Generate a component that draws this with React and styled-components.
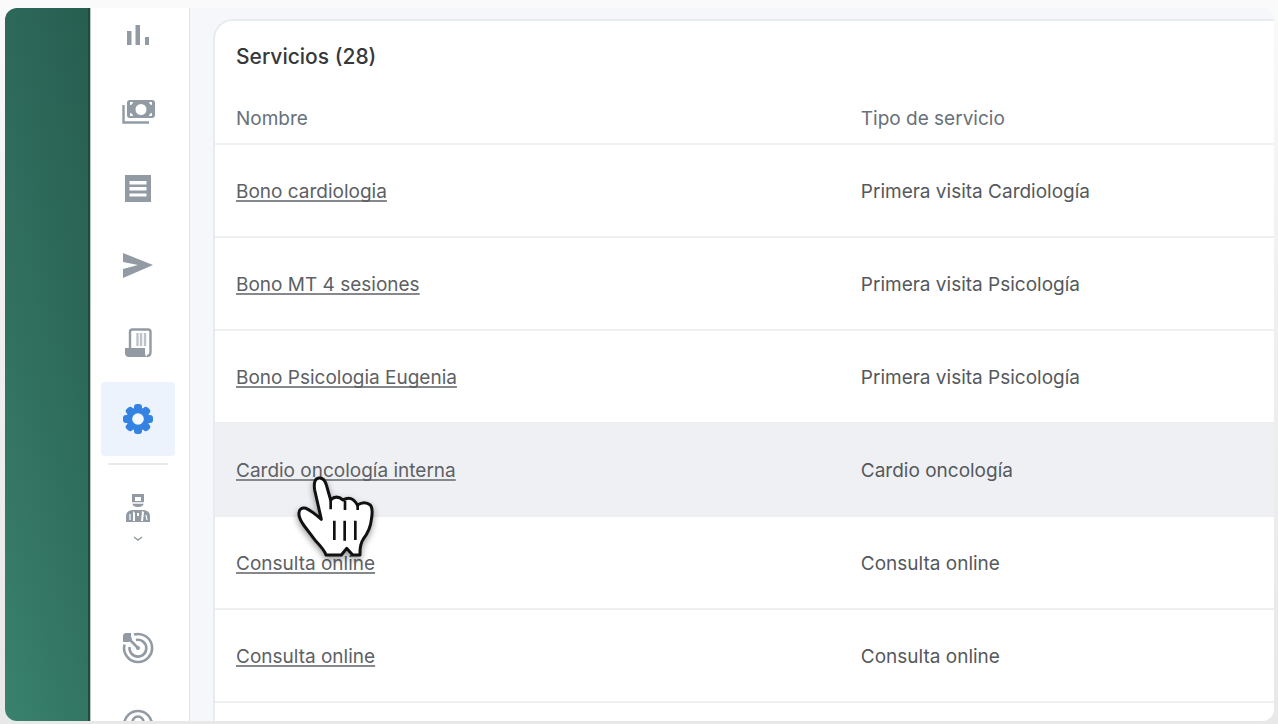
import React from "react";
import styled, { createGlobalStyle } from "styled-components";

const GlobalStyle = createGlobalStyle`
  * { box-sizing: border-box; }
  body {
    margin: 0;
    background: linear-gradient(#fafafa, #f0f0f0 40%, #e8e8e8);
    font-family: Inter, "Liberation Sans", sans-serif;
    color: #55585c;
  }
`;

const Stage = styled.div`
  height: 100vh;
  padding: 8px 4px 3px 5px;
`;

const Frame = styled.div`
  display: flex;
  height: 100%;
  overflow: hidden;
  border-radius: 12px;
  background: #f5f7fb;
`;

const Backdrop = styled.div`
  flex: none;
  width: 85px;
  border-right: 2px solid #214c3c;
  background: linear-gradient(90deg, #ffffff04, #00000014), linear-gradient(#2a6657, #30715f 50%, #36806b);
`;

const Sidebar = styled.nav`
  flex: none;
  display: flex;
  flex-direction: column;
  align-items: center;
  gap: 3px;
  width: 100px;
  margin-top: -11px;
  padding-right: 4px;
  background: #ffffff;
  border-left: 1px solid #b9c8c0;
  border-right: 1px solid #dfe4ea;
`;

const NavButton = styled.button`
  flex: none;
  display: flex;
  flex-direction: column;
  align-items: center;
  justify-content: center;
  gap: 13px;
  width: 74px;
  height: ${(p) => (p.$tall ? 98 : 74)}px;
  padding: 0;
  border: 0;
  border-radius: 4px;
  background: ${(p) => (p.$active ? "#edf3fd" : "transparent")};
  color: ${(p) => (p.$active ? "#3482e2" : "#929aa4")};
  svg { display: block; }
`;

const Separator = styled.hr`
  flex: none;
  width: 60px;
  height: 2px;
  margin: 4px 0 0;
  border: 0;
  background: #e9eaec;
`;

const Spacer = styled.div`
  flex: none;
  height: 39px;
`;

const Main = styled.main`
  flex: 1;
  min-width: 0;
  padding: 11px 0 0 23px;
`;

const Card = styled.section`
  height: 100%;
  overflow: hidden;
  border: 2px solid #e7ecf2;
  border-width: 2px 0 0 2px;
  border-radius: 20px 0 0 0;
  background: #ffffff;
`;

const Title = styled.h1`
  margin: 0;
  padding: 22px 21px 0;
  font-size: 21px;
  line-height: 28px;
  font-weight: 500;
  color: #36383b;
`;

const Table = styled.table`
  width: 100%;
  table-layout: fixed;
  border-collapse: separate;
  border-spacing: 0;
`;

const HeadCell = styled.th`
  width: ${(p) => p.$width};
  height: 74px;
  padding: 24px 21px 0;
  border-bottom: 2px solid #f1f2f4;
  text-align: left;
  font-size: 19px;
  line-height: 24px;
  font-weight: 400;
  color: #687079;
`;

const Row = styled.tr`
  background: ${(p) => (p.$hovered ? "#eff0f4" : "transparent")};
`;

const Cell = styled.td`
  position: relative;
  height: 93px;
  padding: 2px 21px 0;
  border-bottom: 2px solid #eeeff1;
  font-size: 19px;
  line-height: 24px;
`;

const ServiceLink = styled.a`
  color: #5d6064;
  text-decoration: underline #85888c;
  text-decoration-thickness: 2px;
  text-underline-offset: 2px;
  text-decoration-skip-ink: none;
`;

const Pointer = styled.svg`
  position: absolute;
  z-index: 1;
  left: 82px;
  top: 51px;
  overflow: visible;
  pointer-events: none;
  filter: drop-shadow(0 3px 3px #00000066);
`;

const Icon = ({ size = 36, height = size, children }) => (
  <svg width={size} height={height} viewBox={`0 0 ${size} ${height}`} fill="none" stroke="none" aria-hidden="true">
    {children}
  </svg>
);

const ChartIcon = () => (
  <Icon>
    <path fill="currentColor" d="M7 15h4.500v14H7zM15.500 9h4.500v20h-4.500zM25 21h4v8h-4z" />
  </Icon>
);

const CashIcon = () => (
  <Icon>
    <path stroke="currentColor" strokeWidth="2.4" d="M3.5 12v17.5H29" />
    <path
      fill="currentColor"
      fillRule="evenodd"
      d="M10 7h22q3 0 3 3v12q0 3-3 3H10q-3 0-3-3V10q0-3 3-3zM21 11a5.5 5.5 0 1 0 0 11a5.5 5.5 0 0 0 0-11zM10 9v3q2.500 0 3-3zM32 9h-3q.5 3 3 3zM10 23h3q-.5-3-3-3zM32 23v-3q-2.500 0-3 3z"
    />
  </Icon>
);

const ListIcon = () => (
  <Icon>
    <path fill="currentColor" fillRule="evenodd" d="M5 5h26v27H5zM9.500 11v3.500h17V11zM9.500 17v3.500h17V17zM9.500 23.500v3h17v-3z" />
  </Icon>
);

const SendIcon = () => (
  <Icon>
    <path fill="currentColor" d="M3 6 33 18 3 31v-9l15-4-15-3z" />
  </Icon>
);

const ReceiptIcon = () => (
  <Icon>
    <path stroke="currentColor" strokeWidth="2.400" d="M10 25V8q0-2.500 2.500-2.500H28q2.500 0 2.500 2.500v20q0 4-3.500 4" />
    <path fill="currentColor" d="M5 24h20v5q0 3 3 4H9q-4 0-4-4z" />
    <path stroke="currentColor" strokeWidth="2.400" d="M17.500 9v13M21 9v13M25 9v13" opacity=".6" />
  </Icon>
);

const GearIcon = () => (
  <Icon>
    <g fill="currentColor">
      {[0, 45, 90, 135].map((angle) => (
        <rect key={angle} x="14" y="3" width="8" height="30" rx="3" transform={`rotate(${angle} 18 18)`} />
      ))}
      <circle cx="18" cy="18" r="11.500" />
    </g>
    <circle cx="18" cy="18" r="5.800" fill="#f4f8ff" />
  </Icon>
);

const DoctorIcon = () => (
  <Icon size={28} height={30}>
    <path fill="currentColor" fillRule="evenodd" d="M8 1h12v8q0 5-6 5t-6-5zM11 4v4h6V4z" />
    <path stroke="#ffffff" strokeWidth="1.500" d="M8 10h12" />
    <path fill="currentColor" fillRule="evenodd" d="M2 29v-6q0-5 6-6h12q6 1 6 6v6zM9 18v10h2v-8zM18 18l-1 10h2l1-9zM13 20v3h2v-3z" />
    <path stroke="#ffffff" strokeWidth="1.200" d="M6 21v6M22 22l1 5" />
  </Icon>
);

const ChevronIcon = () => (
  <Icon size={10} height={6}>
    <path d="m1 1 4 3 4-3" stroke="currentColor" strokeWidth="1.400" />
  </Icon>
);

const TargetIcon = () => (
  <Icon>
    <g stroke="currentColor" strokeWidth="2.600">
      <path d="M14 4.600a14 14 0 1 1-9.500 10" />
      <path d="M16 10a8.400 8.400 0 1 1-6.400 7" />
      <path d="M8 8l10 10" />
    </g>
    <circle cx="18" cy="18" r="2" fill="currentColor" />
    <path fill="currentColor" d="M3 5l2-2h6v3l1 4-3 2H3z" />
  </Icon>
);

const ProfileIcon = () => (
  <Icon>
    <circle cx="18" cy="18" r="14" stroke="currentColor" strokeWidth="2.600" />
    <circle cx="18" cy="15" r="5.500" stroke="currentColor" strokeWidth="2.600" />
    <path d="M8 28q10-9 20 0" stroke="currentColor" strokeWidth="2.600" />
  </Icon>
);

const HandPointer = () => (
  <Pointer width="78" height="83" viewBox="200 105 234 249" aria-hidden="true">
    <path
      fill="#ffffff"
      stroke="#111111"
      strokeWidth="9"
      strokeLinejoin="round"
      d="M273 238 253 150q-5-34 13-36 17-1 23 24l12 42q17-17 37 0 26-16 43 15 22-14 39 0 9 10 3 44-3 31-24 58-11 16-10 48h-22l-18-20-16 20h-46q-5-15-30-41l-35-46q-18-25-16-40 2-17 21-13 18 8 46 33z"
    />
    <path d="M301 179v29M344 182v28M382 194v16M312 242v58M343 242v60M375 242v58" stroke="#111111" strokeWidth="8" />
  </Pointer>
);

const navigation = [
  { label: "Estadísticas", Glyph: ChartIcon },
  { label: "Pagos", Glyph: CashIcon },
  { label: "Listados", Glyph: ListIcon },
  { label: "Envíos", Glyph: SendIcon },
  { label: "Facturas", Glyph: ReceiptIcon },
  { label: "Configuración", Glyph: GearIcon, active: true },
];

const services = [
  { name: "Bono cardiologia", type: "Primera visita Cardiología" },
  { name: "Bono MT 4 sesiones", type: "Primera visita Psicología" },
  { name: "Bono Psicologia Eugenia", type: "Primera visita Psicología" },
  { name: "Cardio oncología interna", type: "Cardio oncología", hovered: true },
  { name: "Consulta online", type: "Consulta online" },
  { name: "Consulta online", type: "Consulta online" },
];

export default function App() {
  return (
    <Stage>
      <GlobalStyle />
      <Frame>
        <Backdrop />
        <Sidebar>
          {navigation.map(({ label, Glyph, active }) => (
            <NavButton key={label} type="button" aria-label={label} $active={active}>
              <Glyph />
            </NavButton>
          ))}
          <Separator />
          <NavButton type="button" aria-label="Profesionales" $tall>
            <DoctorIcon />
            <ChevronIcon />
          </NavButton>
          <Spacer />
          <NavButton type="button" aria-label="Objetivos">
            <TargetIcon />
          </NavButton>
          <NavButton type="button" aria-label="Perfil">
            <ProfileIcon />
          </NavButton>
        </Sidebar>
        <Main>
          <Card>
            <Title>Servicios (28)</Title>
            <Table>
              <thead>
                <tr>
                  <HeadCell $width="59%" scope="col">Nombre</HeadCell>
                  <HeadCell scope="col">Tipo de servicio</HeadCell>
                </tr>
              </thead>
              <tbody>
                {services.map(({ name, type, hovered }, index) => (
                  <Row key={index} $hovered={hovered}>
                    <Cell>
                      <ServiceLink href="#servicio">{name}</ServiceLink>
                      {hovered && <HandPointer />}
                    </Cell>
                    <Cell>{type}</Cell>
                  </Row>
                ))}
              </tbody>
            </Table>
          </Card>
        </Main>
      </Frame>
    </Stage>
  );
}
